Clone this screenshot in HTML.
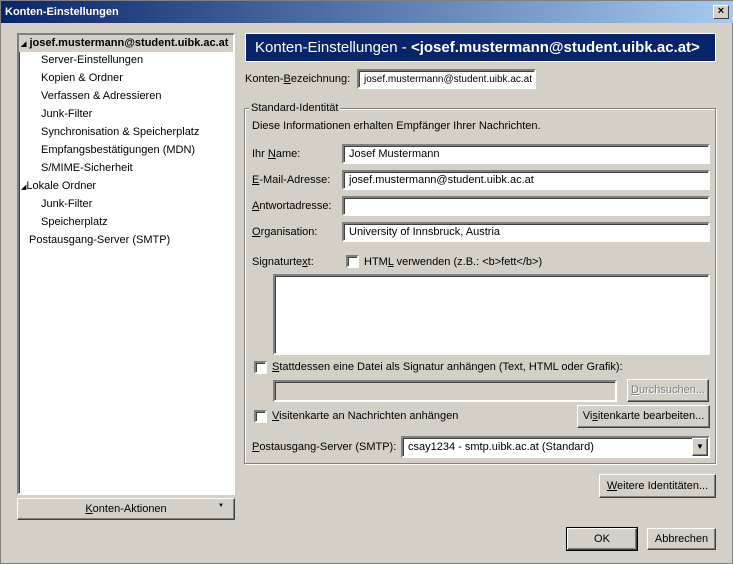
<!DOCTYPE html>
<html><head><meta charset="utf-8"><style>
*{box-sizing:border-box;margin:0;padding:0}
body{width:733px;height:564px;background:#d4d0c8;font-family:"Liberation Sans",sans-serif;font-size:11px;color:#000;position:relative;overflow:hidden;border:1px solid #808080}
.a{position:absolute;white-space:nowrap}
.title{left:0;top:0;width:733px;height:22px;background:linear-gradient(90deg,#0a246a,#a6caf0);color:#fff;font-weight:bold;font-size:11px;padding:5px 0 0 4px}
.x{left:712px;top:4px;width:16px;height:14px;background:#d4d0c8;border:1px solid;border-color:#fff #404040 #404040 #fff;font-size:11px;line-height:11px;text-align:center;font-weight:bold}
.sunk{background:#fff;border:2px solid;border-color:#808080 #fff #fff #808080;box-shadow:inset 1px 1px 0 #404040}
.btn{background:#d4d0c8;border:1px solid;border-color:#fff #404040 #404040 #fff;box-shadow:inset -1px -1px 0 #808080;text-align:center}
.cb{width:13px;height:13px;background:#fff;border:2px solid;border-color:#808080 #fff #fff #808080;box-shadow:inset 1px 1px 0 #404040}
.inp{height:20px;padding:2px 0 0 5px}
u{text-decoration:underline}
</style></head><body>
<div class="a title">Konten-Einstellungen</div>
<div class="a x">×</div>

<div class="a sunk" style="left:16px;top:32px;width:218px;height:462px"></div>
<div class="a" style="left:18px;top:34px;width:214px;height:17px;background:#d4d0c8"></div>
<div class="a" style="left:20px;top:36px;font-weight:bold"><span style="font-size:7px">◢</span> josef.mustermann@student.uibk.ac.at</div>
<div class="a" style="left:40px;top:53px">Server-Einstellungen</div>
<div class="a" style="left:40px;top:71px">Kopien &amp; Ordner</div>
<div class="a" style="left:40px;top:89px">Verfassen &amp; Adressieren</div>
<div class="a" style="left:40px;top:107px">Junk-Filter</div>
<div class="a" style="left:40px;top:125px">Synchronisation &amp; Speicherplatz</div>
<div class="a" style="left:40px;top:143px">Empfangsbestätigungen (MDN)</div>
<div class="a" style="left:40px;top:161px">S/MIME-Sicherheit</div>
<div class="a" style="left:20px;top:179px"><span style="font-size:7px">◢</span>Lokale Ordner</div>
<div class="a" style="left:40px;top:197px">Junk-Filter</div>
<div class="a" style="left:40px;top:215px">Speicherplatz</div>
<div class="a" style="left:28px;top:233px">Postausgang-Server (SMTP)</div>
<div class="a btn" style="left:16px;top:497px;width:218px;height:22px;padding-top:4px"><u>K</u>onten-Aktionen<span style="position:absolute;right:10px;top:4px;font-size:6px">▼</span></div>

<div class="a" style="left:244px;top:32px;width:471px;height:29px;background:#0a246a;border:1px solid #fff;color:#fff;font-size:15px;padding:5px 0 0 9px">Konten-Einstellungen - <b>&lt;josef.mustermann@student.uibk.ac.at&gt;</b></div>

<div class="a" style="left:244px;top:72px">Konten-<u>B</u>ezeichnung:</div>
<div class="a sunk inp" style="left:356px;top:68px;width:179px;font-size:10px;padding-top:3px">josef.mustermann@student.uibk.ac.at</div>

<div class="a" style="left:243px;top:107px;width:472px;height:356px;border:1px solid #808080;box-shadow:1px 1px 0 #fff, inset 1px 1px 0 #fff"></div>
<div class="a" style="left:248px;top:101px;background:#d4d0c8;padding:0 2px">Standard-Identität</div>
<div class="a" style="left:251px;top:119px">Diese Informationen erhalten Empfänger Ihrer Nachrichten.</div>

<div class="a" style="left:251px;top:147px">Ihr <u>N</u>ame:</div>
<div class="a sunk inp" style="left:341px;top:143px;width:368px">Josef Mustermann</div>
<div class="a" style="left:251px;top:173px"><u>E</u>-Mail-Adresse:</div>
<div class="a sunk inp" style="left:341px;top:169px;width:368px">josef.mustermann@student.uibk.ac.at</div>
<div class="a" style="left:251px;top:199px"><u>A</u>ntwortadresse:</div>
<div class="a sunk inp" style="left:341px;top:195px;width:368px"></div>
<div class="a" style="left:251px;top:225px"><u>O</u>rganisation:</div>
<div class="a sunk inp" style="left:341px;top:221px;width:368px">University of Innsbruck, Austria</div>

<div class="a" style="left:251px;top:255px">Signaturte<u>x</u>t:</div>
<div class="a cb" style="left:345px;top:254px"></div>
<div class="a" style="left:363px;top:255px">HTM<u>L</u> verwenden (z.B.: &lt;b&gt;fett&lt;/b&gt;)</div>
<div class="a sunk" style="left:272px;top:273px;width:437px;height:81px"></div>

<div class="a cb" style="left:253px;top:360px"></div>
<div class="a" style="left:271px;top:360px"><u>S</u>tattdessen eine Datei als Signatur anhängen (Text, HTML oder Grafik):</div>
<div class="a" style="left:272px;top:379px;width:344px;height:22px;background:#d4d0c8;border:2px solid;border-color:#808080 #fff #fff #808080;box-shadow:inset 1px 1px 0 #404040"></div>
<div class="a btn" style="left:626px;top:378px;width:82px;height:23px;padding-top:4px;color:#808080;text-shadow:1px 1px 0 #fff"><u>D</u>urchsuchen...</div>

<div class="a cb" style="left:253px;top:409px"></div>
<div class="a" style="left:271px;top:409px"><u>V</u>isitenkarte an Nachrichten anhängen</div>
<div class="a btn" style="left:576px;top:404px;width:133px;height:23px;padding-top:4px">Vi<u>s</u>itenkarte bearbeiten...</div>

<div class="a" style="left:251px;top:440px"><u>P</u>ostausgang-Server (SMTP):</div>
<div class="a sunk inp" style="left:400px;top:435px;width:309px;height:22px;padding-top:3px">csay1234 - smtp.uibk.ac.at (Standard)</div>
<div class="a btn" style="left:691px;top:437px;width:16px;height:18px;font-size:8px;padding-top:3px">▼</div>

<div class="a btn" style="left:598px;top:473px;width:117px;height:24px;padding-top:5px"><u>W</u>eitere Identitäten...</div>

<div class="a btn" style="left:566px;top:527px;width:70px;height:22px;padding-top:4px;outline:1px solid #000">OK</div>
<div class="a btn" style="left:646px;top:527px;width:69px;height:22px;padding-top:4px">Abbrechen</div>
</body></html>
